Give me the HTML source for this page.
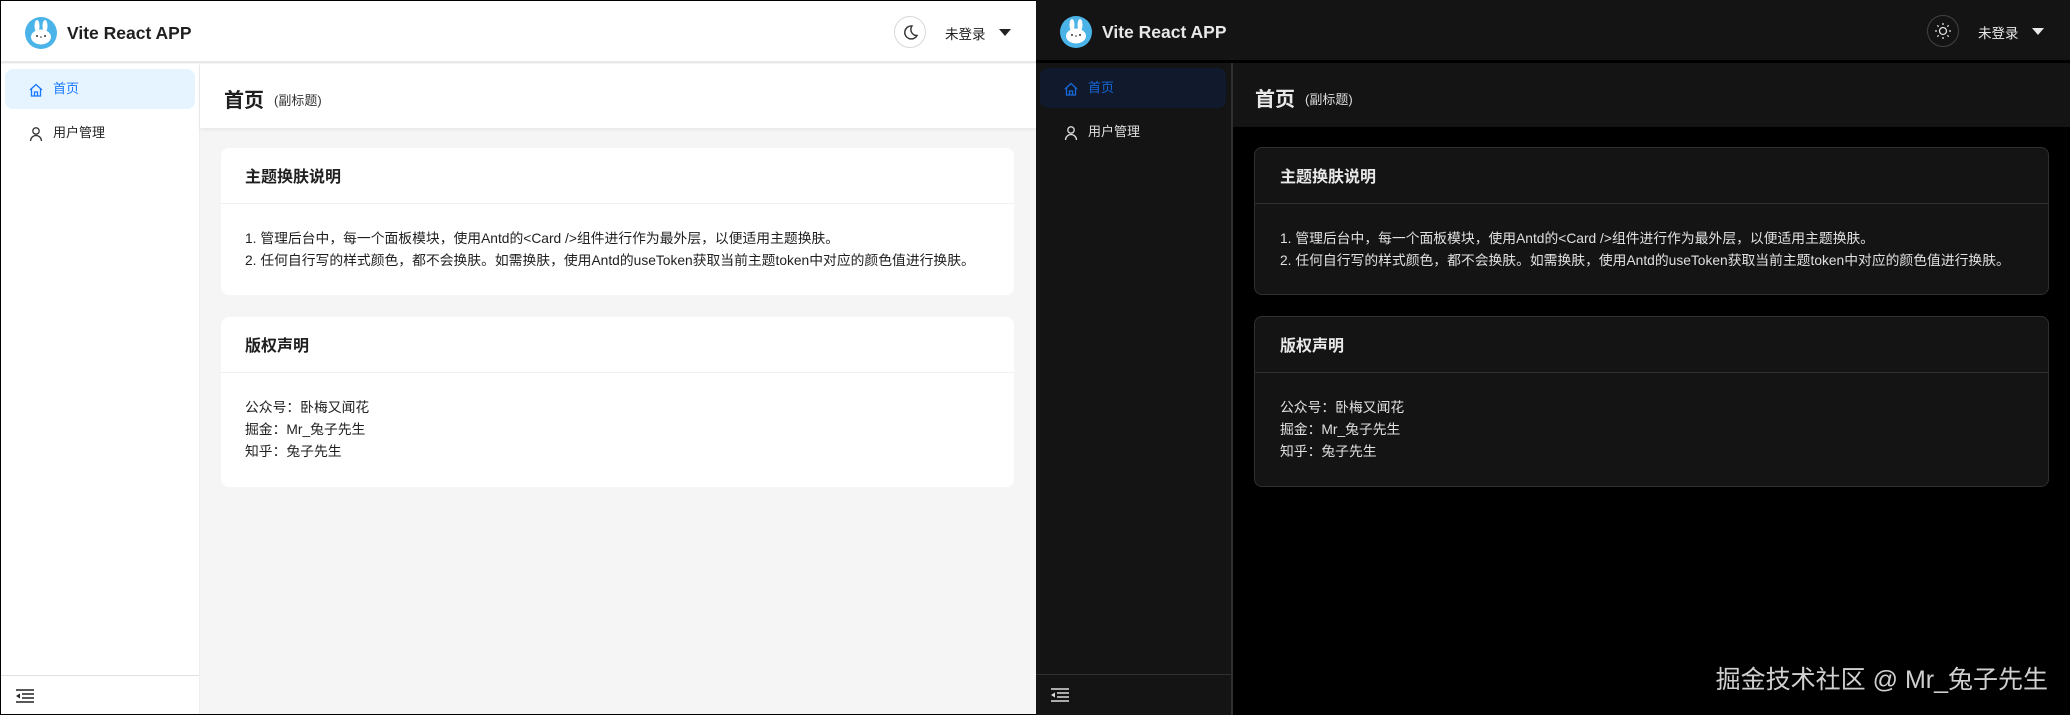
<!DOCTYPE html>
<html><head><meta charset="utf-8"><style>
*{margin:0;padding:0;box-sizing:border-box}
body{width:2070px;height:715px;overflow:hidden;background:#000;font-family:"Liberation Sans","Noto Sans CJK SC",sans-serif;position:relative}
.pane{position:absolute;top:0;height:715px;overflow:hidden}
.abs{position:absolute}
.hdr{left:0;top:0;right:0;height:62px}
.logo{left:24px;top:16px;width:32px;height:32px;border-radius:50%;background:#4ab3e8;overflow:hidden}
.brand{left:66px;top:20px;font-size:17.5px;font-weight:bold;line-height:24px}
.side{left:0;top:63px;width:199px;bottom:0}
.item{left:4px;width:190px;height:40px;border-radius:8px;font-size:13px;line-height:40px;padding-left:48px}
.ph{top:63px;height:64px;right:0}
.card{border-radius:8px}
.ct{font-size:16px;font-weight:bold;position:absolute;left:24px;top:15px}
.cb{position:absolute;left:24px;font-size:13.8px;line-height:22px;white-space:nowrap}
.wm{right:22px;top:665px;font-size:25px;color:#d0d0d0;line-height:30px}
</style></head><body>

<!-- LIGHT PANE -->
<div class="pane" style="left:0;width:1036px;background:#f5f5f5;border:1px solid #000;border-right:none">
  <div class="abs hdr" style="background:#fff;border-bottom:2px solid #e8e8e8"></div>
  <div class="abs logo"><svg width="32" height="32" viewBox="0 0 32 32"><ellipse cx="12" cy="9" rx="2.5" ry="6" fill="#fff"/><ellipse cx="20" cy="9" rx="2.5" ry="6" fill="#fff"/><ellipse cx="16" cy="20" rx="10" ry="7.5" fill="#fff"/><circle cx="12" cy="19" r="1" fill="#333"/><circle cx="20" cy="19" r="1" fill="#333"/><circle cx="16" cy="20" r=".8" fill="#333"/></svg></div>
  <div class="abs brand" style="color:#1f1f1f">Vite React APP</div>
  <div class="abs" style="left:893px;top:15px;width:32px;height:32px;border:1px solid #d9d9d9;border-radius:50%"><svg width="30" height="30" viewBox="0 0 30 30"><path d="M17 9a6.5 6.5 0 1 0 5 9.5A6 6 0 0 1 17 9z" fill="none" stroke="#333" stroke-width="1.4"/></svg></div>
  <div class="abs" style="left:944px;top:22px;font-size:13.5px;color:#1f1f1f">未登录</div>
  <div class="abs" style="left:998px;top:28px;width:0;height:0;border-left:6px solid transparent;border-right:6px solid transparent;border-top:7px solid #222"></div>

  <div class="abs side" style="background:#fff;border-right:1px solid #eee">
    <div class="abs item" style="top:5px;background:#e6f4ff;color:#1677ff">首页</div>
    <svg class="abs" style="left:27px;top:18px" width="16" height="16" viewBox="0 0 16 16"><path d="M2 8L8 2.5 14 8M3.5 6.5V14h9V6.5M6.5 14v-4h3v4" fill="none" stroke="#1677ff" stroke-width="1.3"/></svg>
    <div class="abs item" style="top:49px;color:#1f1f1f">用户管理</div>
    <svg class="abs" style="left:27px;top:62px" width="16" height="16" viewBox="0 0 16 16"><circle cx="8" cy="5" r="3.2" fill="none" stroke="#333" stroke-width="1.3"/><path d="M2.5 15a5.5 5.5 0 0 1 11 0" fill="none" stroke="#333" stroke-width="1.3"/></svg>
    <div class="abs" style="left:0;right:0;top:611px;border-top:1px solid #e0e0e0"></div>
    <svg class="abs" style="left:14px;top:624px" width="20" height="16" viewBox="0 0 20 16"><path d="M1 2h18M7 6h12M7 10h12M1 14h18" stroke="#222" stroke-width="1.6"/><path d="M1 8l4-2.5v5z" fill="#222"/></svg>
  </div>
  <div class="abs ph" style="left:199px;background:#fff;box-shadow:0 2px 4px rgba(0,0,0,.06)">
    <div class="abs" style="left:24px;top:20px;font-size:20px;font-weight:bold;color:#1f1f1f">首页</div>
    <div class="abs" style="left:74px;top:26px;font-size:13px;color:#333">(副标题)</div>
  </div>
  <div class="abs card" style="left:220px;top:147px;width:793px;height:147px;background:#fff">
    <div class="ct" style="color:#1f1f1f">主题换肤说明</div>
    <div class="abs" style="left:0;right:0;top:55px;border-top:1px solid #f0f0f0"></div>
    <div class="cb" style="top:80px;color:#1f1f1f">1. 管理后台中，每一个面板模块，使用Antd的&lt;Card /&gt;组件进行作为最外层，以便适用主题换肤。<br>2. 任何自行写的样式颜色，都不会换肤。如需换肤，使用Antd的useToken获取当前主题token中对应的颜色值进行换肤。</div>
  </div>
  <div class="abs card" style="left:220px;top:316px;width:793px;height:170px;background:#fff">
    <div class="ct" style="color:#1f1f1f">版权声明</div>
    <div class="abs" style="left:0;right:0;top:55px;border-top:1px solid #f0f0f0"></div>
    <div class="cb" style="top:80px;color:#1f1f1f">公众号：卧梅又闻花<br>掘金：Mr_兔子先生<br>知乎：兔子先生</div>
  </div>
</div>

<!-- DARK PANE -->
<div class="pane" style="left:1036px;width:1034px;background:#000">
  <div class="abs hdr" style="background:#141414;border-bottom:2px solid #000"></div>
  <div class="abs logo"><svg width="32" height="32" viewBox="0 0 32 32"><ellipse cx="12" cy="9" rx="2.5" ry="6" fill="#fff"/><ellipse cx="20" cy="9" rx="2.5" ry="6" fill="#fff"/><ellipse cx="16" cy="20" rx="10" ry="7.5" fill="#fff"/><circle cx="12" cy="19" r="1" fill="#333"/><circle cx="20" cy="19" r="1" fill="#333"/><circle cx="16" cy="20" r=".8" fill="#333"/></svg></div>
  <div class="abs brand" style="color:#e8e8e8">Vite React APP</div>
  <div class="abs" style="left:891px;top:15px;width:32px;height:32px;border:1px solid #424242;border-radius:50%"><svg width="30" height="30" viewBox="0 0 30 30"><circle cx="15" cy="15" r="3.5" fill="none" stroke="#ddd" stroke-width="1.3"/><path d="M15 7v2M15 21v2M7 15h2M21 15h2M9.3 9.3l1.4 1.4M19.3 19.3l1.4 1.4M9.3 20.7l1.4-1.4M19.3 10.7l1.4-1.4" stroke="#ddd" stroke-width="1.3"/></svg></div>
  <div class="abs" style="left:942px;top:22px;font-size:13.5px;color:#e8e8e8">未登录</div>
  <div class="abs" style="left:996px;top:28px;width:0;height:0;border-left:6px solid transparent;border-right:6px solid transparent;border-top:7px solid #e8e8e8"></div>

  <div class="abs side" style="width:197px;background:#141414;border-right:2px solid #303030">
    <div class="abs item" style="top:5px;width:186px;background:#111a2c;color:#1668dc">首页</div>
    <svg class="abs" style="left:27px;top:18px" width="16" height="16" viewBox="0 0 16 16"><path d="M2 8L8 2.5 14 8M3.5 6.5V14h9V6.5M6.5 14v-4h3v4" fill="none" stroke="#1668dc" stroke-width="1.3"/></svg>
    <div class="abs item" style="top:49px;color:#e0e0e0">用户管理</div>
    <svg class="abs" style="left:27px;top:62px" width="16" height="16" viewBox="0 0 16 16"><circle cx="8" cy="5" r="3.2" fill="none" stroke="#ddd" stroke-width="1.3"/><path d="M2.5 15a5.5 5.5 0 0 1 11 0" fill="none" stroke="#ddd" stroke-width="1.3"/></svg>
    <div class="abs" style="left:0;right:0;top:611px;border-top:1px solid #303030"></div>
    <svg class="abs" style="left:14px;top:624px" width="20" height="16" viewBox="0 0 20 16"><path d="M1 2h18M7 6h12M7 10h12M1 14h18" stroke="#ddd" stroke-width="1.6"/><path d="M1 8l4-2.5v5z" fill="#ddd"/></svg>
  </div>
  <div class="abs ph" style="left:197px;background:#141414">
    <div class="abs" style="left:22px;top:20px;font-size:20px;font-weight:bold;color:#e8e8e8">首页</div>
    <div class="abs" style="left:72px;top:26px;font-size:13px;color:#ddd">(副标题)</div>
  </div>
  <div class="abs card" style="left:218px;top:147px;width:795px;height:148px;background:#141414;border:1px solid #303030">
    <div class="ct" style="color:#e8e8e8;left:25px">主题换肤说明</div>
    <div class="abs" style="left:0;right:0;top:55px;border-top:1px solid #303030"></div>
    <div class="cb" style="top:80px;left:25px;color:#e0e0e0">1. 管理后台中，每一个面板模块，使用Antd的&lt;Card /&gt;组件进行作为最外层，以便适用主题换肤。<br>2. 任何自行写的样式颜色，都不会换肤。如需换肤，使用Antd的useToken获取当前主题token中对应的颜色值进行换肤。</div>
  </div>
  <div class="abs card" style="left:218px;top:316px;width:795px;height:171px;background:#141414;border:1px solid #303030">
    <div class="ct" style="color:#e8e8e8;left:25px">版权声明</div>
    <div class="abs" style="left:0;right:0;top:55px;border-top:1px solid #303030"></div>
    <div class="cb" style="top:80px;left:25px;color:#e0e0e0">公众号：卧梅又闻花<br>掘金：Mr_兔子先生<br>知乎：兔子先生</div>
  </div>
  <div class="abs wm">掘金技术社区 @ Mr_兔子先生</div>
</div>
</body></html>
